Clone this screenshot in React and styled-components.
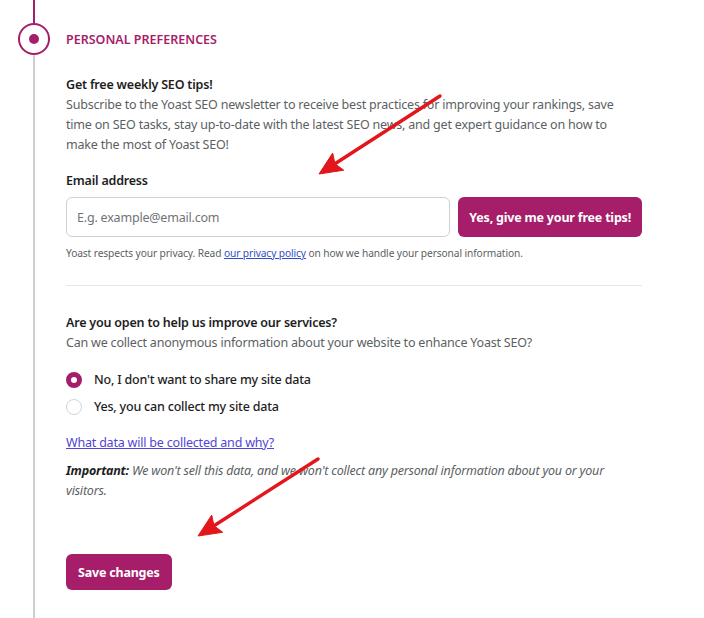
import React from 'react';
import styled, { createGlobalStyle } from 'styled-components';

const GlobalStyle = createGlobalStyle`
  html, body {
    margin: 0;
    padding: 0;
    background: #fff;
  }
  body {
    font-family: "Noto Sans", "Open Sans", sans-serif;
    font-size: 12.5px;
    letter-spacing: -0.2px;
    color: #1e1e1e;
  }
`;

const brand = '#a61e69';

const Page = styled.div`
  position: relative;
  width: 704px;
  height: 618px;
  overflow: hidden;
  display: flex;
`;

const Timeline = styled.div`
  width: 68px;
  margin-right: -2px;
  display: flex;
  flex-direction: column;
  align-items: center;
  flex-shrink: 0;
`;

const Line = styled.div`
  width: 2px;
  height: ${(p) => (p.grow ? 'auto' : `${p.h}px`)};
  flex: ${(p) => (p.grow ? 1 : 'none')};
  background: ${(p) => (p.active ? brand : '#cfcfcf')};
`;

const Step = styled.div`
  width: 32px;
  height: 32px;
  box-sizing: border-box;
  border: 2.5px solid ${brand};
  border-radius: 50%;
  display: flex;
  align-items: center;
  justify-content: center;
  &::after {
    content: '';
    width: 10px;
    height: 10px;
    border-radius: 50%;
    background: ${brand};
  }
`;

const Content = styled.div`
  width: 576px;
  display: flex;
  flex-direction: column;
`;

const Heading = styled.h2`
  margin: 25px 0 0;
  line-height: 30px;
  font-size: 12.5px;
  font-weight: 600;
  text-transform: uppercase;
  color: ${brand};
  letter-spacing: 0;
`;

const Title = styled.div`
  margin-top: ${(p) => p.mt || 0}px;
  line-height: 20px;
  font-weight: 600;
  color: #1e1e1e;
`;

const Text = styled.p`
  margin: ${(p) => p.mt || 0}px 0 0;
  max-width: ${(p) => p.maxW || 576}px;
  line-height: 20px;
  color: #5b5f64;
  font-style: ${(p) => (p.italic ? 'italic' : 'normal')};
  b {
    color: #1e1e1e;
    font-weight: 700;
  }
`;

const FieldRow = styled.div`
  margin-top: 6px;
  display: flex;
  gap: 8px;
`;

const Input = styled.input`
  flex: 1;
  height: 40px;
  box-sizing: border-box;
  border: 1px solid #d1d1d1;
  border-radius: 6px;
  padding: 0 10px;
  font: inherit;
  letter-spacing: inherit;
  color: #1e1e1e;
  &::placeholder {
    color: #6f7378;
  }
`;

const Button = styled.button`
  height: ${(p) => p.h || 40}px;
  padding: 0 ${(p) => p.px || 12}px;
  border: none;
  border-radius: 6px;
  background: ${brand};
  color: #fff;
  font: inherit;
  font-weight: 700;
  letter-spacing: inherit;
  white-space: nowrap;
  cursor: pointer;
  align-self: flex-start;
  margin-top: ${(p) => p.mt || 0}px;
`;

const Note = styled.div`
  margin-top: 8px;
  font-size: 10.2px;
  letter-spacing: -0.1px;
  line-height: 16px;
  color: #5b5f64;
`;

const Link = styled.a`
  color: ${(p) => p.color || '#4f46d6'};
  text-decoration: underline;
`;

const Divider = styled.hr`
  margin: 24px 0 0;
  border: none;
  border-top: 1px solid #e6e6e6;
`;

const Radios = styled.div`
  margin-top: 17px;
  display: flex;
  flex-direction: column;
  gap: 7px;
`;

const RadioRow = styled.label`
  display: flex;
  align-items: center;
  gap: 12px;
  line-height: 20px;
  color: #1e1e1e;
  font-weight: 500;
`;

const Dot = styled.span`
  width: 16px;
  height: 16px;
  box-sizing: border-box;
  border-radius: 50%;
  border: ${(p) => (p.checked ? `5px solid ${brand}` : '1px solid #d4d4d4')};
  background: #fff;
  flex-shrink: 0;
`;

const LinkLine = styled.div`
  margin-top: 16px;
  line-height: 20px;
`;

const Overlay = styled.svg`
  position: absolute;
  left: 0;
  top: 0;
  pointer-events: none;
`;

const Arrow = ({ x1, y1, x2, y2 }) => {
  const ang = Math.atan2(y2 - y1, x2 - x1);
  const len = 25;
  const spread = 0.42;
  const bx = x2 - Math.cos(ang) * (len - 6);
  const by = y2 - Math.sin(ang) * (len - 6);
  const l = [x2 - Math.cos(ang - spread) * len, y2 - Math.sin(ang - spread) * len];
  const r = [x2 - Math.cos(ang + spread) * len, y2 - Math.sin(ang + spread) * len];
  return (
    <g fill="#e3161b" stroke="#e3161b">
      <line x1={x1} y1={y1} x2={bx} y2={by} strokeWidth="3.4" strokeLinecap="round" />
      <polygon points={`${x2},${y2} ${l[0]},${l[1]} ${bx},${by} ${r[0]},${r[1]}`} strokeWidth="1" strokeLinejoin="round" />
    </g>
  );
};

export default function App() {
  return (
    <>
      <GlobalStyle />
      <Page>
        <Timeline>
          <Line active h={23} />
          <Step />
          <Line grow />
        </Timeline>
        <Content>
          <Heading>Personal preferences</Heading>
          <Title mt={20}>Get free weekly SEO tips!</Title>
          <Text maxW={558}>
            Subscribe to the Yoast SEO newsletter to receive best practices for improving your rankings, save
            time on SEO tasks, stay up-to-date with the latest SEO news, and get expert guidance on how to
            make the most of Yoast SEO!
          </Text>
          <Title mt={16}>Email address</Title>
          <FieldRow>
            <Input placeholder="E.g. example@email.com" />
            <Button px={11}>Yes, give me your free tips!</Button>
          </FieldRow>
          <Note>
            Yoast respects your privacy. Read <Link color="#2f4fc4">our privacy policy</Link> on how we handle your
            personal information.
          </Note>
          <Divider />
          <Title mt={27}>Are you open to help us improve our services?</Title>
          <Text>Can we collect anonymous information about your website to enhance Yoast SEO?</Text>
          <Radios>
            <RadioRow>
              <Dot checked />
              No, I don't want to share my site data
            </RadioRow>
            <RadioRow>
              <Dot />
              Yes, you can collect my site data
            </RadioRow>
          </Radios>
          <LinkLine>
            <Link>What data will be collected and why?</Link>
          </LinkLine>
          <Text mt={8} italic>
            <b>Important:</b> We won't sell this data, and we won't collect any personal information about you or your
            visitors.
          </Text>
          <Button h={36} px={12} mt={53}>Save changes</Button>
        </Content>
        <Overlay width="704" height="618">
          <Arrow x1={440} y1={96} x2={319} y2={174} />
          <Arrow x1={318} y1={459} x2={198} y2={536} />
        </Overlay>
      </Page>
    </>
  );
}
